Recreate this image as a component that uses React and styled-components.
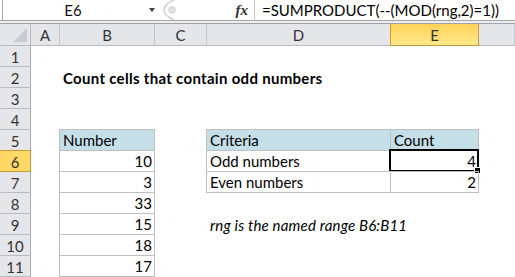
import React from "react";
import styled, { createGlobalStyle, css } from "styled-components";

const Global = createGlobalStyle`
  html, body { margin: 0; padding: 0; background: #fff; }
  body { width: 515px; height: 277px; overflow: hidden; font-family: Lato, "Open Sans", sans-serif; }
  #root { width: 515px; height: 277px; overflow: hidden; }
`;

const Page = styled.div`
  width: 515px;
  height: 277px;
  display: flex;
  flex-direction: column;
  overflow: hidden;
`;

const FormulaBar = styled.div`
  height: 20px;
  flex: none;
  display: flex;
  align-items: stretch;
  border-bottom: 1px solid #a6a6a6;
  padding-left: 2px;
  background: #fff;
`;

const NameBox = styled.div`
  width: 158px;
  flex: none;
  border-left: 1px solid #a6a6a6;
  display: flex;
  align-items: center;
  position: relative;
  font-size: 15px;
  color: #111;
`;

const NameText = styled.span`
  width: 140px;
  text-align: center;
`;

const DropArrow = styled.span`
  width: 0;
  height: 0;
  margin-left: 6px;
  border-left: 3px solid transparent;
  border-right: 3px solid transparent;
  border-top: 4px solid #444;
`;

const Knob = styled.svg`
  flex: none;
  display: block;
`;

const FxArea = styled.div`
  width: 67px;
  flex: none;
  display: flex;
  align-items: center;
  justify-content: flex-end;
  padding-right: 6px;
  border-right: 1px solid #c8c8c8;
  font-family: "Liberation Serif", serif;
  font-style: italic;
  font-weight: bold;
  font-size: 15px;
  color: #333;
`;

const FormulaText = styled.div`
  flex: 1;
  display: flex;
  align-items: center;
  padding-left: 7px;
  font-size: 15px;
  color: #000;
  white-space: nowrap;
`;

const Strip = styled.div`
  height: 2px;
  flex: none;
  background: #eceef1;
`;

const Sheet = styled.div`
  display: grid;
  grid-template-columns: 31px 29px 95px 52px 184px 88px 1fr;
  grid-template-rows: 22px repeat(11, 21px);
  border-top: 1px solid #9ea3aa;
`;

const headBase = css`
  background: #e4e6ea;
  color: #333;
  font-size: 15px;
  display: flex;
  align-items: center;
  justify-content: center;
  box-sizing: border-box;
  border-right: 1px solid #c3c7cc;
  border-bottom: 1px solid #b8bcc2;
`;

const Corner = styled.div`
  ${headBase};
  position: relative;
  border-right-color: #b8bcc2;
`;

const CornerTri = styled.div`
  position: absolute;
  right: 3px;
  bottom: 3px;
  width: 0;
  height: 0;
  border-left: 14px solid transparent;
  border-bottom: 14px solid #c8cbcf;
`;

const ColHead = styled.div`
  ${headBase};
  ${(p) =>
    p.$active &&
    css`
      background: linear-gradient(#ffd257, #ffe98c);
      border-right-color: #c99a3c;
      border-bottom-color: #c99a3c;
      box-shadow: -1px 0 0 #c99a3c;
      color: #333;
    `}
`;

const RowHead = styled.div`
  ${headBase};
  border-right-color: #a9aeb5;
  padding-top: 2px;
  ${(p) =>
    p.$active &&
    css`
      background: #ffd866;
      border-right-color: #c99a3c;
      border-bottom-color: #c99a3c;
      box-shadow: 0 -1px 0 #c99a3c;
    `}
`;

const Cell = styled.div`
  position: relative;
  box-sizing: border-box;
  font-size: 15px;
  color: #000;
  white-space: nowrap;
  display: flex;
  align-items: flex-end;
  padding: 0 3px 1px 3px;
  justify-content: ${(p) => (p.$right ? "flex-end" : "flex-start")};
  ${(p) => p.$right && css`padding-right: 2px;`}
  ${(p) => p.$bold && css`font-weight: bold; letter-spacing: 0.3px;`}
  ${(p) => p.$italic && css`font-style: italic; letter-spacing: 0.18px;`}
  ${(p) =>
    p.$table &&
    css`
      border-right: 1px solid #bfbfbf;
      border-bottom: 1px solid #bfbfbf;
      box-shadow: -1px -1px 0 #bfbfbf, -1px 0 0 #bfbfbf, 0 -1px 0 #bfbfbf;
    `}
  ${(p) => p.$head && css`background: #c5dfe8;`}
`;

const Selection = styled.div`
  position: absolute;
  left: -2px;
  top: -2px;
  width: 90px;
  height: 23px;
  box-sizing: border-box;
  border: 2px solid #000;
  pointer-events: none;
`;

const FillHandle = styled.div`
  position: absolute;
  right: -3px;
  bottom: -3px;
  width: 5px;
  height: 5px;
  background: #000;
  box-shadow: 0 0 0 1px #fff;
`;

const cols = ["A", "B", "C", "D", "E", ""];

const grid = {
  2: { B: { text: "Count cells that contain odd numbers", bold: true } },
  5: {
    B: { text: "Number", table: true, head: true },
    D: { text: "Criteria", table: true, head: true },
    E: { text: "Count", table: true, head: true },
  },
  6: {
    B: { text: "10", table: true, right: true },
    D: { text: "Odd numbers", table: true },
    E: { text: "4", table: true, right: true, selected: true },
  },
  7: {
    B: { text: "3", table: true, right: true },
    D: { text: "Even numbers", table: true },
    E: { text: "2", table: true, right: true },
  },
  8: { B: { text: "33", table: true, right: true } },
  9: {
    B: { text: "15", table: true, right: true },
    D: { text: "rng is the named range B6:B11", italic: true },
  },
  10: { B: { text: "18", table: true, right: true } },
  11: { B: { text: "17", table: true, right: true } },
};

export default function App() {
  const rows = [];
  for (let r = 1; r <= 11; r++) {
    rows.push(
      <RowHead key={`h${r}`} $active={r === 6}>
        {r}
      </RowHead>
    );
    ["A", "B", "C", "D", "E", "F"].forEach((c) => {
      const d = (grid[r] && grid[r][c]) || {};
      rows.push(
        <Cell
          key={`${c}${r}`}
          $table={d.table}
          $head={d.head}
          $right={d.right}
          $bold={d.bold}
          $italic={d.italic}
        >
          {d.text}
          {d.selected && (
            <Selection>
              <FillHandle />
            </Selection>
          )}
        </Cell>
      );
    });
  }

  return (
    <Page>
      <Global />
      <FormulaBar>
        <NameBox>
          <NameText>E6</NameText>
          <DropArrow />
        </NameBox>
        <Knob width="20" height="20" viewBox="0 0 20 20">
          <path d="M13 0 C6 3 3 6 3 10 C3 14 6 17 13 20" fill="none" stroke="#c4c4c4" strokeWidth="1.2" />
          <circle cx="11" cy="10" r="3.3" fill="#e2e2e2" stroke="#c9c9c9" strokeWidth="0.8" />
        </Knob>
        <FxArea>fx</FxArea>
        <FormulaText>=SUMPRODUCT(--(MOD(rng,2)=1))</FormulaText>
      </FormulaBar>
      <Strip />
      <Sheet>
        <Corner>
          <CornerTri />
        </Corner>
        {cols.map((c) => (
          <ColHead key={c || "F"} $active={c === "E"}>
            {c}
          </ColHead>
        ))}
        {rows}
      </Sheet>
    </Page>
  );
}
